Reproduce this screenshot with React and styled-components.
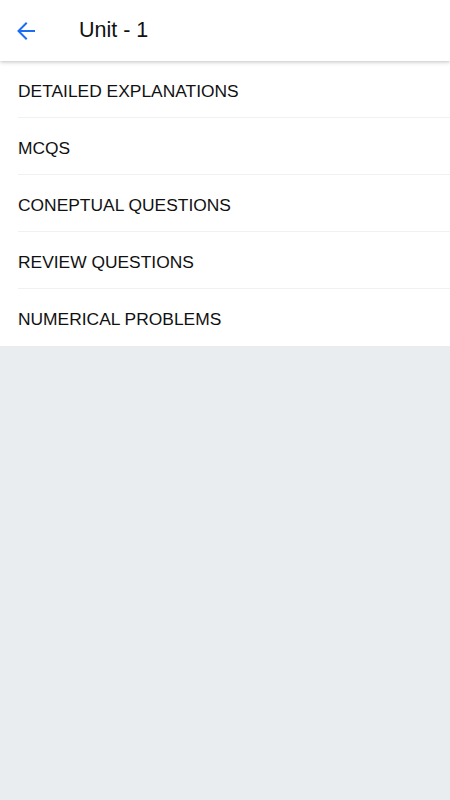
import React from "react";
import styled, { createGlobalStyle } from "styled-components";

const GlobalStyle = createGlobalStyle`
  html, body {
    margin: 0;
    padding: 0;
    background: #e9edf0;
    font-family: "Liberation Sans", Arial, sans-serif;
  }
`;

const items = [
  "DETAILED EXPLANATIONS",
  "MCQS",
  "CONEPTUAL QUESTIONS",
  "REVIEW QUESTIONS",
  "NUMERICAL PROBLEMS",
];

const Page = styled.div`
  min-height: 800px;
  background: #e9edf0;
`;

const Header = styled.header`
  height: 61px;
  display: flex;
  align-items: center;
  background: #ffffff;
  box-shadow: 0 1px 4px rgba(0, 0, 0, 0.25);
  position: relative;
  z-index: 1;
`;

const BackButton = styled.button`
  width: 52px;
  height: 61px;
  padding: 0 0 0 17px;
  border: none;
  background: none;
  display: flex;
  align-items: center;
  cursor: pointer;
`;

const Title = styled.h1`
  margin: 0 0 0 27px;
  font-size: 21.5px;
  font-weight: 400;
  color: #111;
`;

const List = styled.ul`
  margin: 0;
  padding: 0;
  list-style: none;
  background: #ffffff;
`;

const Item = styled.li`
  margin-left: 18px;
  height: 57px;
  padding-top: 4px;
  display: flex;
  align-items: center;
  font-size: 17.4px;
  color: #111;
  border-bottom: ${(p) => (p.$last ? "none" : "1px solid #f1f1f1")};
  box-sizing: border-box;
`;

export default function App() {
  return (
    <Page>
      <GlobalStyle />
      <Header>
        <BackButton aria-label="Back">
          <svg width="18" height="18" viewBox="0 0 18 18" fill="none">
            <path
              d="M17 9H2M9 1.5L1.5 9L9 16.5"
              stroke="#1b6ef3"
              strokeWidth="2"
              strokeLinecap="square"
            />
          </svg>
        </BackButton>
        <Title>Unit - 1</Title>
      </Header>
      <List>
        {items.map((t, i) => (
          <Item key={t} $last={i === items.length - 1}>
            {t}
          </Item>
        ))}
      </List>
    </Page>
  );
}
